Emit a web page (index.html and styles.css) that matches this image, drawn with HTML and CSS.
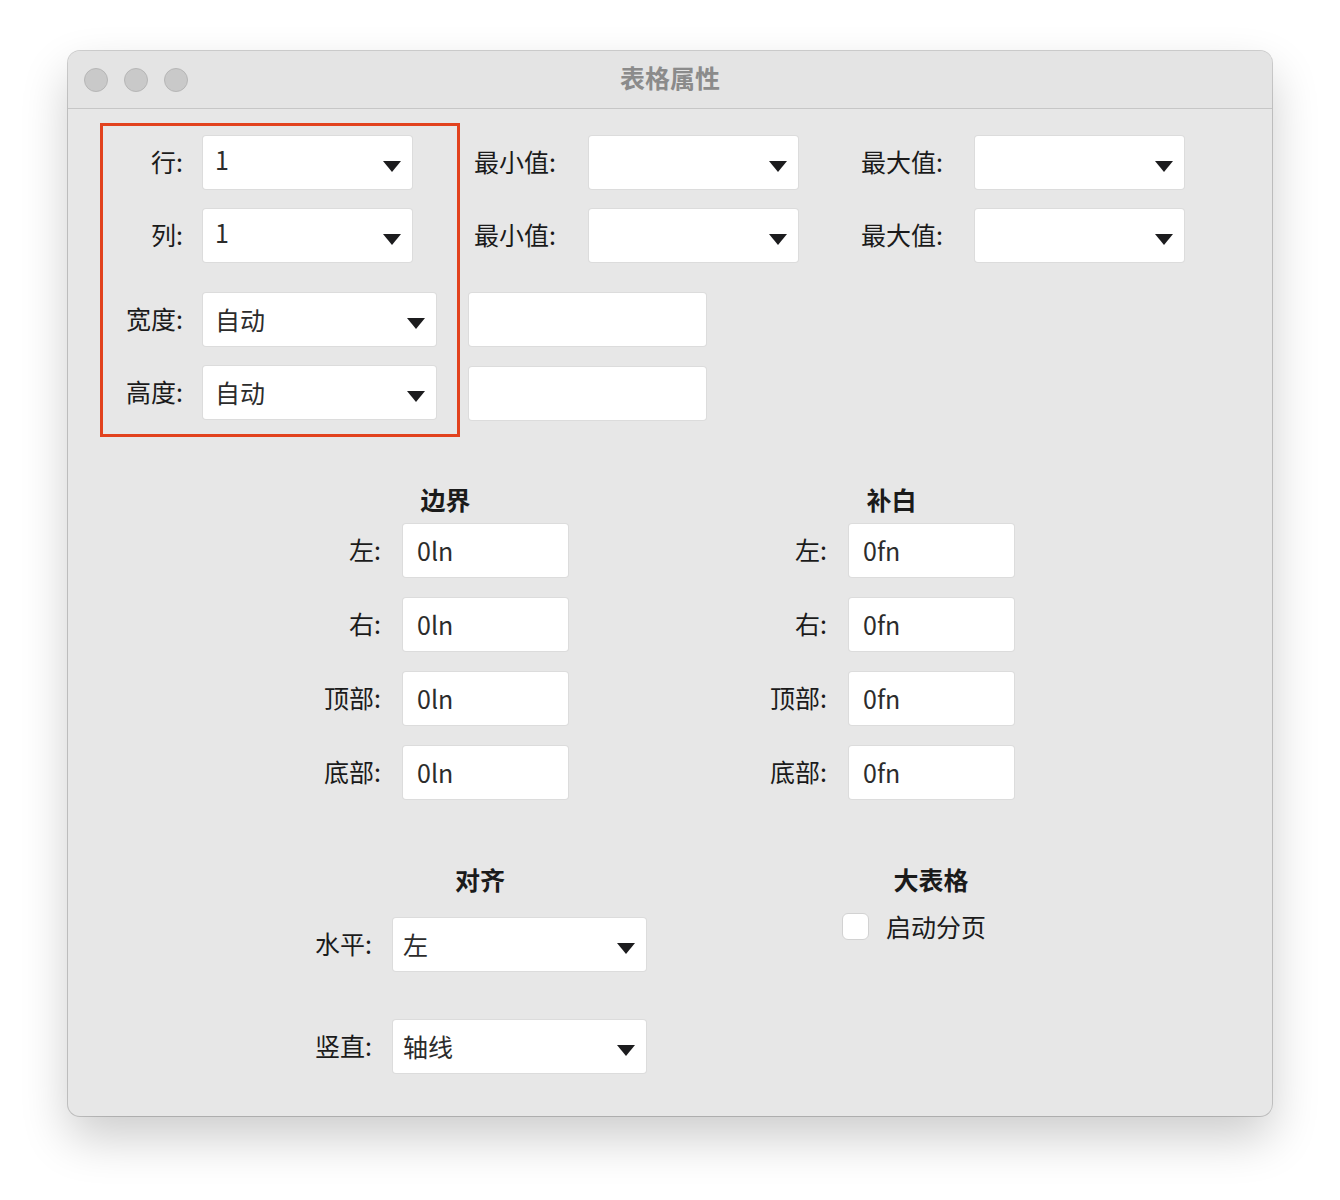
FILE: index.html
```html
<!DOCTYPE html>
<html lang="zh-CN">
  <head>
    <meta charset="UTF-8" />
    <title>表格属性</title>
    <link rel="stylesheet" href="styles.css">
  </head>
  <body>
    <div class="window">
      <!-- title bar -->
      <div class="titlebar">
        <div class="lights"><span></span><span></span><span></span></div>
        <div class="title">表格属性</div>
        <div></div>
      </div>

      <div class="content">
        <!-- rows / cols / size -->
        <div class="top">
          <div class="size-box">
            <label>行:</label>
            <div class="select w-sm num">1<i class="caret"></i></div>
            <label>列:</label>
            <div class="select w-sm num">1<i class="caret"></i></div>
            <label class="gap-big">宽度:</label>
            <div class="select w-md gap-big">自动<i class="caret"></i></div>
            <label>高度:</label>
            <div class="select w-md">自动<i class="caret"></i></div>
          </div>

          <div class="limits">
            <div class="limit-grid">
              <label>最小值:</label>
              <div class="select w-sm"><i class="caret"></i></div>
              <label class="far">最大值:</label>
              <div class="select w-sm"><i class="caret"></i></div>
              <label>最小值:</label>
              <div class="select w-sm"><i class="caret"></i></div>
              <label class="far">最大值:</label>
              <div class="select w-sm"><i class="caret"></i></div>
            </div>
            <div class="field w-free"></div>
            <div class="field w-free"></div>
          </div>
        </div>

        <!-- border / padding -->
        <div class="sections">
          <div class="group">
            <h3>边界</h3>
            <div class="form">
              <label>左:</label><div class="field w-box">0ln</div>
              <label>右:</label><div class="field w-box">0ln</div>
              <label>顶部:</label><div class="field w-box">0ln</div>
              <label>底部:</label><div class="field w-box">0ln</div>
            </div>
          </div>
          <div class="group padding-group">
            <h3>补白</h3>
            <div class="form">
              <label>左:</label><div class="field w-box">0fn</div>
              <label>右:</label><div class="field w-box">0fn</div>
              <label>顶部:</label><div class="field w-box">0fn</div>
              <label>底部:</label><div class="field w-box">0fn</div>
            </div>
          </div>
        </div>

        <!-- align / big table -->
        <div class="sections bottom">
          <div class="group align-group">
            <h3>对齐</h3>
            <div class="form align-form">
              <label>水平:</label>
              <div class="select w-align">左<i class="caret"></i></div>
              <label>竖直:</label>
              <div class="select w-align">轴线<i class="caret"></i></div>
            </div>
          </div>
          <div class="group big-group">
            <h3>大表格</h3>
            <div class="check-row">
              <span class="checkbox"></span>
              <span>启动分页</span>
            </div>
          </div>
        </div>
      </div>
    </div>
  </body>
</html>
```

FILE: styles.css
```css
body {
  margin: 0;
  padding: 51px 0 84px 68px;
  background: #ffffff;
  font-family: "Noto Sans CJK SC", "Noto Sans", sans-serif;
  color: #1b1b1b;
}
.window {
  width: 1204px;
  height: 1065px;
  box-sizing: border-box;
  background: #e7e7e7;
  border-radius: 12px;
  overflow: hidden;
  box-shadow: 0 0 0 1px rgba(0, 0, 0, 0.18), 0 22px 48px rgba(0, 0, 0, 0.2);
}
.titlebar {
  height: 57px;
  background: #e4e4e4;
  border-bottom: 1px solid #c6c6c6;
  display: grid;
  grid-template-columns: 1fr auto 1fr;
  align-items: center;
}
.lights {
  display: flex;
  gap: 16px;
  padding-left: 16px;
}
.lights span {
  width: 22px;
  height: 22px;
  border-radius: 50%;
  background: #c9c9c9;
  border: 1px solid #b6b6b6;
}
.title {
  font-size: 25px;
  font-weight: bold;
  color: #8b8b8b;
  padding-bottom: 5px;
}
label {
  font-size: 25px;
  text-align: right;
  white-space: nowrap;
  padding-bottom: 3px;
}
.select,
.field {
  height: 53px;
  box-sizing: border-box;
  background: #fff;
  border-radius: 3px;
  box-shadow: 0 0 0 1px #dcdcdc;
  font-size: 25px;
  color: #2c2c2c;
  display: flex;
  align-items: center;
  padding: 0 11px 2px 12px;
}
.select {
  justify-content: space-between;
}
.select.num {
  padding-bottom: 8px;
}
.caret {
  margin-left: auto;
  width: 0;
  height: 0;
  border-left: 9px solid transparent;
  border-right: 9px solid transparent;
  border-top: 11px solid #1c1c1e;
  transform: translateY(5px);
}
.select.num .caret {
  transform: translateY(8px);
}
.w-sm { width: 209px; }
.w-md { width: 233px; }
.w-free { width: 237px; }
.w-box { width: 165px; padding-left: 14px; }
.w-align { width: 253px; padding-left: 10px; }

/* top part */
.top {
  display: flex;
  align-items: flex-start;
}
.size-box {
  margin: 14px 0 0 32px;
  width: 360px;
  box-sizing: border-box;
  border: 3px solid #e2421e;
  padding: 10px 0 15px 0;
  display: grid;
  grid-template-columns: 80px auto;
  column-gap: 20px;
  row-gap: 20px;
  align-items: center;
}
.size-box .gap-big {
  margin-top: 11px;
}
.limits {
  margin: 27px 0 0 9px;
}
.limit-grid {
  display: grid;
  grid-template-columns: 120px 209px 177px 209px;
  row-gap: 20px;
  align-items: center;
}
.limit-grid label {
  text-align: left;
  padding-left: 5px;
}
.limit-grid label.far {
  padding-left: 63px;
}
.limits .field {
  margin-top: 31px;
}
.limits .field + .field {
  margin-top: 21px;
}

/* sections */
.sections {
  display: flex;
  margin-top: 47px;
  padding-left: 255px;
}
.group h3 {
  margin: 0 0 10px;
  font-size: 25px;
  line-height: 30px;
  text-align: center;
}
.form {
  display: grid;
  grid-template-columns: 58px auto;
  column-gap: 22px;
  row-gap: 21px;
  align-items: center;
}
.padding-group {
  margin-left: 201px;
}
.sections.bottom {
  margin-top: 65px;
  padding-left: 246px;
}
.align-group h3 {
  margin-bottom: 24px;
}
.align-form {
  column-gap: 21px;
  row-gap: 49px;
}
.big-group {
  margin-left: 196px;
  width: 178px;
}
.big-group h3 {
  margin-bottom: 14px;
}
.check-row {
  display: flex;
  align-items: center;
  gap: 17px;
  font-size: 25px;
}
.checkbox {
  width: 27px;
  height: 27px;
  box-sizing: border-box;
  background: #fff;
  border: 1px solid #d2d2d2;
  border-radius: 6px;
}
```
